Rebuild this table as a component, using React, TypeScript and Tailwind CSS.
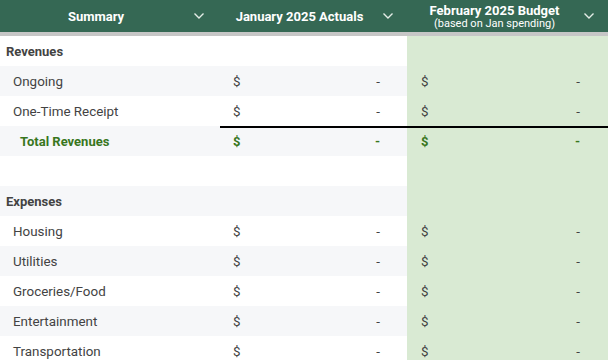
const ROWS: { label: string; kind: 'section' | 'item' | 'total' | 'blank' }[] = [
  { label: 'Revenues', kind: 'section' },
  { label: 'Ongoing', kind: 'item' },
  { label: 'One-Time Receipt', kind: 'item' },
  { label: 'Total Revenues', kind: 'total' },
  { label: '', kind: 'blank' },
  { label: 'Expenses', kind: 'section' },
  { label: 'Housing', kind: 'item' },
  { label: 'Utilities', kind: 'item' },
  { label: 'Groceries/Food', kind: 'item' },
  { label: 'Entertainment', kind: 'item' },
  { label: 'Transportation', kind: 'item' },
]

const Chevron = () => (
  <svg width="12" height="8" viewBox="0 0 12 8" fill="none" className="text-[#e4ede7]">
    <polyline points="1.5,1.5 6,6 10.5,1.5" stroke="currentColor" strokeWidth="1.4" />
  </svg>
)

const HeaderCell = ({ title, sub }: { title: string; sub?: string }) => (
  <div className="flex items-center h-full">
    <div className="flex-1 flex flex-col items-center justify-center leading-none">
      <span className="text-[13px] font-bold text-white">{title}</span>
      {sub && <span className="text-[11px] text-white mt-[1px]">{sub}</span>}
    </div>
    <div className="w-[26px] flex justify-start pl-[1px]">
      <Chevron />
    </div>
  </div>
)

const Amount = ({ total, dollarPad }: { total: boolean; dollarPad: string }) => (
  <div
    className={`flex items-center justify-between h-full pt-[2px] ${dollarPad} ${
      total ? 'text-[#38761d] font-bold text-[13px]' : ''
    }`}
  >
    <span>$</span>
    <span>-</span>
  </div>
)

export default function App() {
  return (
    <div
      className="w-[608px] h-[360px] overflow-hidden bg-white text-[13.4px] text-[#434343]"
      style={{ fontFamily: 'Roboto, "Liberation Sans", sans-serif' }}
    >
      <div className="grid grid-cols-[218px_189px_201px] h-[32px] bg-[#356854]">
        <HeaderCell title="Summary" />
        <HeaderCell title="January 2025 Actuals" />
        <HeaderCell title="February 2025 Budget" sub="(based on Jan spending)" />
      </div>
      <div className="h-[4px] bg-[#c6c6c6]" />
      {ROWS.map((row, i) => {
        const bg = i % 2 === 1 ? 'bg-[#f6f7f9]' : 'bg-white'
        const total = row.kind === 'total'
        const showAmounts = row.kind === 'item' || total
        return (
          <div key={i} className={`grid grid-cols-[218px_189px_201px] h-[30px] relative ${bg}`}>
            <div
              className={`flex items-center pt-[2px] ${
                row.kind === 'section'
                  ? 'pl-[6px] font-bold text-[13px]'
                  : total
                    ? 'pl-[20px] font-bold text-[13px] text-[#38761d]'
                    : 'pl-[13px]'
              }`}
            >
              {row.label}
            </div>
            <div>{showAmounts && <Amount total={total} dollarPad="pl-[15px] pr-[27px]" />}</div>
            <div className="bg-[#d9ead3]">
              {showAmounts && <Amount total={total} dollarPad="pl-[14px] pr-[28px]" />}
            </div>
            {total && <div className="absolute left-[220px] right-0 top-0 h-[1.5px] bg-black" />}
          </div>
        )
      })}
    </div>
  )
}
